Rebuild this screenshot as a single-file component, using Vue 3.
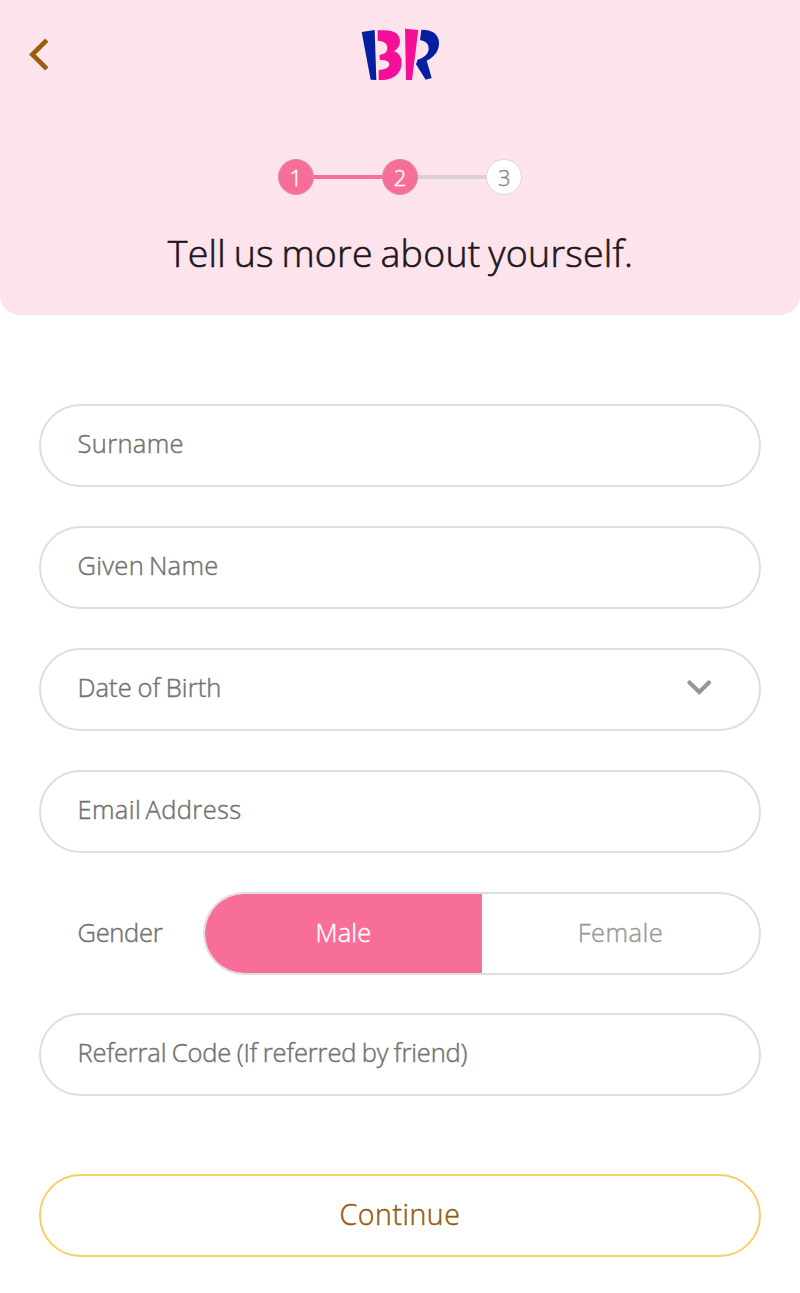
<script setup>
import { ref } from 'vue'

const gender = ref('male')
const steps = [
  { n: 1, done: true },
  { n: 2, done: true },
  { n: 3, done: false },
]
</script>

<template>
  <main class="page">
    <header class="hero">
      <div class="topbar">
        <button class="back" aria-label="Back">
          <svg width="24" height="36" viewBox="0 0 24 36">
            <path d="M19.8 4.2 5.3 18.5 19.8 32.8" fill="none" stroke="#9d5c0c" stroke-width="4.6" />
          </svg>
        </button>
        <svg class="logo" width="100" height="80" viewBox="0 0 300 240">
          <path fill="#051fa0" d="M35 51 74 45 79 195 62 194Z" />
          <path fill="#f50e98" d="M83 46H101C132 45 150 57 150 79C150 92 144 102 132 109C148 115 155 127 155 143C155 174 132 195 95 195H86V165C108 164 118 157 118 148C118 139 108 135 89 134V119C104 118 112 110 112 98C112 86 102 78 83 77Z" />
          <path fill="#f50e98" d="M165 41 205 45 186 195H168Z" />
          <path fill="#051fa0" d="M214 44C247 43 267 58 267 84C267 108 253 126 230 137L245 189 227 194 198 148 203 134C224 127 236 115 236 101C236 87 228 78 210 76Z" />
        </svg>
      </div>
      <ol class="steps">
        <li v-for="s in steps" :key="s.n" class="step" :class="{ done: s.done }">
          <span class="dot">{{ s.n }}</span>
        </li>
      </ol>
      <h1 class="title">Tell us more about yourself.</h1>
    </header>

    <form class="form" @submit.prevent>
      <div class="field"><span class="surname">Surname</span></div>
      <div class="field"><span class="given">Given Name</span></div>
      <div class="field select">
        <span class="birth">Date of Birth</span>
        <svg width="26" height="18" viewBox="0 0 26 18">
          <path d="M3.4 4.4 13.3 14 23 4.4" fill="none" stroke="#979797" stroke-width="4.2" stroke-linecap="round" />
        </svg>
      </div>
      <div class="field"><span class="email">Email Address</span></div>
      <div class="gender">
        <span class="gender-label">Gender</span>
        <div class="toggle">
          <button type="button" class="option male" :class="{ on: gender === 'male' }" @click="gender = 'male'">Male</button>
          <button type="button" class="option female" :class="{ on: gender === 'female' }" @click="gender = 'female'">Female</button>
        </div>
      </div>
      <div class="field"><span class="referral">Referral Code (If referred by friend)</span></div>
      <button class="continue">Continue</button>
    </form>
  </main>
</template>

<style>
body {
  background: #fff;
}
</style>

<style scoped>
.page {
  height: 1293px;
  overflow: hidden;
  font-family: "Open Sans", "Noto Sans", sans-serif;
  font-weight: 300;
  -webkit-text-stroke: 0.45px currentColor;
}
button {
  padding: 0;
  background: none;
  border: 0;
  font: inherit;
  -webkit-text-stroke: inherit;
}
.hero {
  height: 315px;
  background: #fde3ec;
  border-radius: 0 0 20px 20px;
  display: flex;
  flex-direction: column;
  align-items: center;
}
.topbar {
  width: 100%;
  height: 95px;
  padding-top: 15px;
  box-sizing: border-box;
  display: grid;
  grid-template-columns: 1fr 100px 1fr;
}
.back {
  width: 24px;
  height: 36px;
  margin: 21px 0 0 27px;
}
.back svg,
.logo {
  display: block;
}
.steps {
  display: flex;
  list-style: none;
  margin: 64px 0 0;
  padding: 0;
}
.step {
  display: flex;
  align-items: center;
}
.step + .step::before {
  content: "";
  width: 68.3px;
  height: 4px;
  background: #d9d0d5;
}
.step.done + .step.done::before {
  background: #f76f98;
}
.dot {
  width: 36px;
  height: 36px;
  box-sizing: border-box;
  border: 1px solid #dfd5da;
  border-radius: 50%;
  background: #fff;
  color: #8c8c8c;
  font-size: 22px;
  line-height: 35px;
  text-align: center;
}
.done .dot {
  background: #f76f98;
  border-color: #dc8ba5;
  color: #fff;
}
.title {
  margin: 32px 0 0;
  padding-left: 1px;
  font-size: 37.5px;
  line-height: 52px;
  font-weight: 300;
  letter-spacing: 0.25px;
  word-spacing: -2.3px;
  -webkit-text-stroke-width: 0.6px;
  color: #1c1719;
  white-space: nowrap;
}
.form {
  display: flex;
  flex-direction: column;
  gap: 38.8px;
  padding: 89.3px 39px 0;
}
.field,
.toggle,
.continue {
  height: 83px;
  box-sizing: border-box;
  border: 2px solid #dedede;
  border-radius: 42px;
}
.field {
  display: flex;
  align-items: center;
  padding: 0 47px 5px 36.5px;
  color: #717171;
  font-size: 25.5px;
  line-height: 36px;
  white-space: nowrap;
}
.select {
  justify-content: space-between;
}
.surname {
  letter-spacing: 0.35px;
}
.given {
  letter-spacing: 0.3px;
  word-spacing: -2px;
}
.birth {
  letter-spacing: 0.05px;
  word-spacing: -1px;
}
.email {
  letter-spacing: 0.38px;
  word-spacing: -2.5px;
}
.referral {
  letter-spacing: -0.14px;
  word-spacing: -1px;
}
.gender {
  display: flex;
  align-items: center;
  margin: 1px 0 -1px;
  padding-left: 38.5px;
  font-size: 25.5px;
  line-height: 36px;
  color: #717171;
}
.gender-label {
  width: 125.5px;
  letter-spacing: -0.3px;
  padding-bottom: 4px;
}
.toggle {
  flex: 1;
  display: flex;
  overflow: hidden;
}
.option {
  flex: 1;
  padding-bottom: 4px;
  color: #999;
}
.male {
  letter-spacing: 0.2px;
}
.female {
  letter-spacing: 0.45px;
}
.option.on {
  background: #f76f98;
  color: #fff;
}
.continue {
  margin-top: 38.8px;
  border-color: #f7cf63;
  color: #92590f;
  font-size: 28.5px;
  letter-spacing: 0.55px;
  padding-bottom: 2px;
}
</style>
